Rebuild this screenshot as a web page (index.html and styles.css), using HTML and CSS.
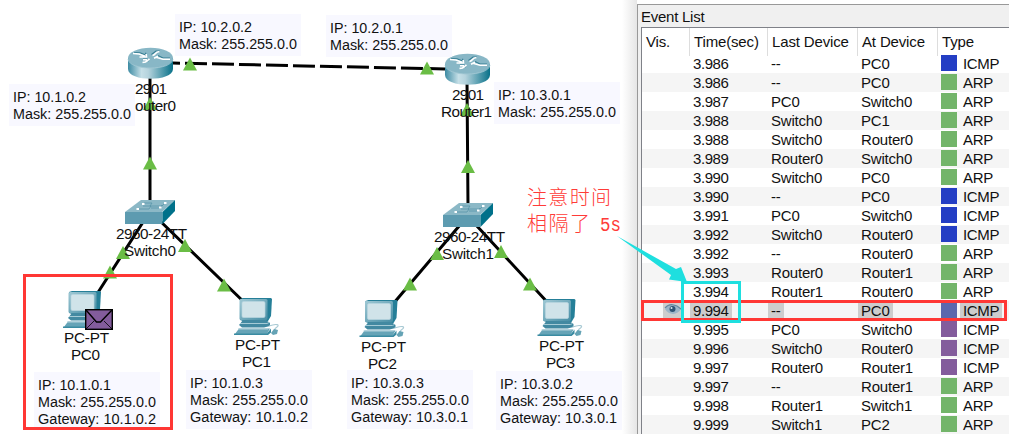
FILE: index.html
```html
<!DOCTYPE html>
<html lang="zh">
<head>
<meta charset="utf-8">
<title>Event List</title>
<link rel="stylesheet" href="styles.css">
</head>
<body>
<main class="app">
<section class="canvas">
<svg class="topology" width="637" height="434" viewBox="0 0 637 434">
<defs>
<linearGradient id="rim"><stop offset="0" stop-color="#3d8ba3"/><stop offset=".3" stop-color="#c5dfe7"/><stop offset=".45" stop-color="#b5d3dd"/><stop offset="1" stop-color="#087189"/></linearGradient>
<linearGradient id="mon" x2="1" y2="1"><stop offset="0" stop-color="#9fc8d4"/><stop offset="1" stop-color="#478ea5"/></linearGradient>
<path id="up" d="M0-7L7 6H-7Z" fill="#6abd45"/>
<g id="router">
<path d="M128 58v11c0 13 45 13 45 0V58z" fill="url(#rim)"/>
<ellipse cx="150.500" cy="58" rx="22.500" ry="10.200" fill="#88b7c6"/>
<path d="M128 59c1 12 44 12 45 0" fill="none" stroke="#a6cad5" stroke-width=".8"/>
<g fill="none" stroke="#377f94" stroke-width="1.100"><path d="M134 52.500l6 .3 5 2 1-2M151.500 54.500l4.500-3.500h4M170 58h-7l-5-2.500M143 59h4l2 2"/></g>
<g fill="none" stroke="#fff" stroke-width="1.600"><path d="M133 53.500l6 .5 6 2.300M139.500 57h7l-.3-3M152.500 55.500c4-1 2-3.500 7-4M170 59.300h-7l-7-2M154 58.300l4-2M142.500 62.500l3-.5 4-3M143 59.800h4"/></g>
</g>
<g id="switch">
<path d="M125 212l16-12h34l-13 12z" fill="#8bb8c6"/><path d="M125 212h37.500v12H125z" fill="#5d9bb0"/><path d="M162.500 212L175 200v11l-12.500 13z" fill="#00718a"/>
<path d="M144 203h8l-2 3h12l2-2M139 209h10l2-3h-8M151 208h9l2-3" fill="none" stroke="#5996aa" stroke-width=".8"/>
<path d="M142 204h2.500M164 203h2.500M136.500 209h2.500M159 207.500h2.500" stroke="#fff" stroke-width="2"/>
</g>
<g id="pc">
<path d="M240 299l3-1h28l1 1-1 17-3 5h-25l-3-1z" fill="#257f98"/>
<rect x="239.500" y="299" width="28" height="21" rx="1.500" fill="url(#mon)"/>
<rect x="242" y="301.500" width="23" height="16" rx="1.500" fill="#d0e3e9" stroke="#b9d6df" stroke-width=".7"/>
<path d="M243 320h23l4 3v3l-6 1.500h-22l-3-2.500z" fill="#4289a1"/><path d="M240 323.500h27l2-1" stroke="#a5cbd6" stroke-width="1" fill="none"/>
<path d="M239 328.500h31l-3 5.500h-32z" fill="#66a4b7"/><path d="M238 329h30" stroke="#b3d2dc" stroke-width="1"/><path d="M234 333.500h33l4-5v4l-3 2.500h-34z" fill="#3a8ba2"/>
</g>
<g id="mouse"><path d="M269 326c8-3 11-1 8 1s-3 3 0 4" fill="none" stroke="#a9cad4" stroke-width="1.100"/><path d="M271 333l3-4 4 1-1 4-4 1z" fill="#65a3b5"/></g>
</defs>
<g class="links">
<path d="M150 72V204M467 80L468 207M145 219L97 294M158 219L245 303M460 225L393 304M476 225L549 304"/>
<path d="M173 63L445 69" stroke-dasharray="22 5" stroke-dashoffset="15"/>
</g>
<use href="#up" x="190" y="64.500"/><use href="#up" x="150" y="104"/><use href="#up" x="150" y="163.500"/>
<use href="#up" x="427" y="68.500"/><use href="#up" x="467" y="110"/><use href="#up" x="468" y="167"/>
<use href="#up" x="123" y="253"/><use href="#up" x="110" y="272.500"/><use href="#up" x="185" y="246"/><use href="#up" x="224" y="285.500"/>
<use href="#up" x="437" y="254"/><use href="#up" x="501" y="252"/><use href="#up" x="410" y="284.500"/><use href="#up" x="530" y="284.500"/>
<use href="#router"/><use href="#router" x="317" y="6"/>
<use href="#switch"/><use href="#switch" x="318" y="3"/>
<use href="#pc" x="-171" y="-7"/><use href="#pc"/><use href="#mouse"/>
<use href="#pc" x="125.500" y="2"/><use href="#mouse" x="125.500" y="2"/><use href="#pc" x="303.500" y="1"/><use href="#mouse" x="303.500" y="1"/>
<g class="envelope"><rect x="85.700" y="309.700" width="26.600" height="19.600"/><path d="M86 310l10.500 12h4L112 310"/><path class="fold" d="M86 329l8-8M112 329l-8-8"/></g>
<g class="note-bg">
<path d="M175 14h126v42H175zM9 84h126v42H9zM326 15h126v42H326zM494 82h126v42H494zM34 372h126v58H34zM186 370h126v59H186zM347 370h126v59H347zM496 371h126v59H496z"/>
</g>
<g class="text">
<text x="179" y="32" textLength="73" lengthAdjust="spacingAndGlyphs">IP: 10.2.0.2</text><text x="179" y="49" textLength="118" lengthAdjust="spacingAndGlyphs">Mask: 255.255.0.0</text>
<text x="13" y="102" textLength="73" lengthAdjust="spacingAndGlyphs">IP: 10.1.0.2</text><text x="13" y="119" textLength="118" lengthAdjust="spacingAndGlyphs">Mask: 255.255.0.0</text>
<text x="330" y="33" textLength="73" lengthAdjust="spacingAndGlyphs">IP: 10.2.0.1</text><text x="330" y="50" textLength="118" lengthAdjust="spacingAndGlyphs">Mask: 255.255.0.0</text>
<text x="498" y="100" textLength="73" lengthAdjust="spacingAndGlyphs">IP: 10.3.0.1</text><text x="498" y="117" textLength="118" lengthAdjust="spacingAndGlyphs">Mask: 255.255.0.0</text>
<text x="38" y="390" textLength="73" lengthAdjust="spacingAndGlyphs">IP: 10.1.0.1</text><text x="38" y="407" textLength="118" lengthAdjust="spacingAndGlyphs">Mask: 255.255.0.0</text><text x="38" y="424" textLength="118" lengthAdjust="spacingAndGlyphs">Gateway: 10.1.0.2</text>
<text x="190" y="388" textLength="73" lengthAdjust="spacingAndGlyphs">IP: 10.1.0.3</text><text x="190" y="405" textLength="118" lengthAdjust="spacingAndGlyphs">Mask: 255.255.0.0</text><text x="190" y="422" textLength="118" lengthAdjust="spacingAndGlyphs">Gateway: 10.1.0.2</text>
<text x="351" y="388" textLength="73" lengthAdjust="spacingAndGlyphs">IP: 10.3.0.3</text><text x="351" y="405" textLength="118" lengthAdjust="spacingAndGlyphs">Mask: 255.255.0.0</text><text x="351" y="422" textLength="117" lengthAdjust="spacingAndGlyphs">Gateway: 10.3.0.1</text>
<text x="500" y="389" textLength="73" lengthAdjust="spacingAndGlyphs">IP: 10.3.0.2</text><text x="500" y="406" textLength="118" lengthAdjust="spacingAndGlyphs">Mask: 255.255.0.0</text><text x="500" y="423" textLength="117" lengthAdjust="spacingAndGlyphs">Gateway: 10.3.0.1</text>
<text x="135" y="94" textLength="32">2901</text><text x="135" y="111" textLength="41">outer0</text>
<text x="452" y="100" textLength="32">2901</text><text x="441" y="117" textLength="51">Router1</text>
<text x="116" y="239" textLength="71">2960-24TT</text><text x="124" y="256" textLength="52">Switch0</text>
<text x="434" y="242" textLength="71">2960-24TT</text><text x="442" y="259" textLength="52">Switch1</text>
<text x="64" y="343" textLength="45">PC-PT</text><text x="71" y="360" textLength="29">PC0</text>
<text x="235" y="350" textLength="45">PC-PT</text><text x="242" y="367" textLength="29">PC1</text>
<text x="361" y="352" textLength="45">PC-PT</text><text x="368" y="369" textLength="29">PC2</text>
<text x="539" y="351" textLength="45">PC-PT</text><text x="546" y="368" textLength="29">PC3</text>
</g>
<g class="remark"><text x="527" y="205" textLength="84">注意时间</text><text x="527" y="231" textLength="63">相隔了</text><text x="600" y="231" textLength="21" lengthAdjust="spacingAndGlyphs" class="latin">5s</text></g>
</svg>
</section>
<section class="panel">
<h1 class="title">Event List</h1>
<div class="events" id="events">
<div class="head"><span>Vis.</span><span>Time(sec)</span><span>Last Device</span><span>At Device</span><span>Type</span></div>
</div>
</section>
</main>
<svg class="marks" width="1009" height="434" viewBox="0 0 1009 434">
<path d="M617 236L676 269 681 267 687 282 669 279.500 671 275Z" fill="#1edfdf"/>
<g fill="none" stroke-width="3"><path d="M24.500 275.500h147v153h-147zM642.500 301.500h363v18h-363z" stroke="#ff3734"/><path d="M682.500 282.500h57v39h-57z" stroke="#1edfdf"/></g>
</svg>
<script src="events.js"></script>
</body>
</html>
```
FILE: styles.css
```css
* { box-sizing: border-box; }
body { margin: 0; background: #fff; color: #111; font: 15px/19px "Liberation Sans", Arial, sans-serif; overflow: hidden; }
.app { display: flex; width: 1009px; height: 434px; }
.canvas { width: 637px; background: linear-gradient(90deg, #fff 622px, #e6e6e6 637px); }
.topology { display: block; }
.links { fill: none; stroke: #000; stroke-width: 3; }
.text { fill: #111; font-size: 15.3px; }
.note-bg { fill: #f8f8ff; }
.envelope { fill: none; stroke: #000; stroke-width: 1.4; }
.envelope rect { fill: #835c9c; }
.envelope .fold { stroke-width: .8; }
.remark { fill: #ff3b38; font: 300 20px "Noto Sans CJK SC", sans-serif; }
.remark .latin { font: 400 20px "Liberation Mono", monospace; }
.panel { flex: 1; margin-top: 4px; padding-left: 3px; background: #f0f0f0; border-top: 1px solid #999; border-left: 1px solid #999; overflow: hidden; }
.title { margin: 0; height: 22px; padding-top: 2px; font-size: 15px; font-weight: 400; line-height: 19px; letter-spacing: -.25px; }
.events { height: 407px; background: #fff; border-top: 1px solid #7f8188; border-left: 1px solid #7f8188; overflow: hidden; }
.head, .row { display: grid; grid-template-columns: 48px 78px 90px 80px 71px; }
.head { height: 26px; line-height: 28px; letter-spacing: -.15px; }
.head span { padding-left: 4px; border-right: 1px solid #ddd; white-space: nowrap; }
.head span:last-child { border: 0; }
.row { height: 19px; line-height: 19px; }
.row:nth-child(odd) { background: #f5f5f5; }
.cell { padding-left: 3px; white-space: nowrap; letter-spacing: -.2px; }
.vis { display: flex; padding-left: 21px; }
.time { letter-spacing: -.42px; }
.type { display: flex; gap: 3px; padding-left: 3px; letter-spacing: -.35px; }
.label { padding: 0 3px; height: 17px; line-height: 17px; margin-top: 1px; }
.swatch { width: 16px; height: 16px; margin-top: 1px; }
.blue { background: #243ec4; }
.green { background: #73b56a; }
.violet { background: #835c9c; }
.muted { background: #5b68ad; }
.cell .label { display: inline-block; margin-left: -3px; }
.selected .label { background: #cdcdcd; }
.selected .eye { background: #cdcdcd; }
.selected .time .label { width: 42px; }
.eye { margin-top: 1px; }
.marks { position: absolute; left: 0; top: 0; pointer-events: none; }
```
FILE: events.js
```js
const events = [
  ["3.986", "--", "PC0", "blue"],
  ["3.986", "--", "PC0", "green"],
  ["3.987", "PC0", "Switch0", "green"],
  ["3.988", "Switch0", "PC1", "green"],
  ["3.988", "Switch0", "Router0", "green"],
  ["3.989", "Router0", "Switch0", "green"],
  ["3.990", "Switch0", "PC0", "green"],
  ["3.990", "--", "PC0", "blue"],
  ["3.991", "PC0", "Switch0", "blue"],
  ["3.992", "Switch0", "Router0", "blue"],
  ["3.992", "--", "Router0", "green"],
  ["3.993", "Router0", "Router1", "green"],
  ["3.994", "Router1", "Router0", "green"],
  ["9.994", "--", "PC0", "muted"],
  ["9.995", "PC0", "Switch0", "violet"],
  ["9.996", "Switch0", "Router0", "violet"],
  ["9.997", "Router0", "Router1", "violet"],
  ["9.997", "--", "Router1", "green"],
  ["9.998", "Router1", "Switch1", "green"],
  ["9.999", "Switch1", "PC2", "green"]
];
const eye = '<svg class="eye" width="19" height="17" viewBox="0 0 19 17"><path d="M2 7C5 1 14 2 18 7c-3 6-12 7-16 0" fill="#9db5c8"/><path d="M2 6C6 1 13 2 18 7" fill="none" stroke="#6487a0" stroke-width="1.200"/><circle cx="9.500" cy="7" r="3" fill="#2f5474"/><circle cx="8.500" cy="6" r="1" fill="#dbe8ef"/></svg>';
const list = document.getElementById("events");
for (const [time, last, at, color] of events) {
  const selected = color === "muted";
  const row = document.createElement("div");
  row.className = selected ? "row selected" : "row";
  row.innerHTML = `<div class="vis">${selected ? eye : ""}</div>
    <div class="cell time"><span class="label">${time}</span></div>
    <div class="cell"><span class="label">${last}</span></div>
    <div class="cell"><span class="label">${at}</span></div>
    <div class="type"><i class="swatch ${color}"></i><span class="label">${color === "green" ? "ARP" : "ICMP"}</span></div>`;
  list.append(row);
}
```
